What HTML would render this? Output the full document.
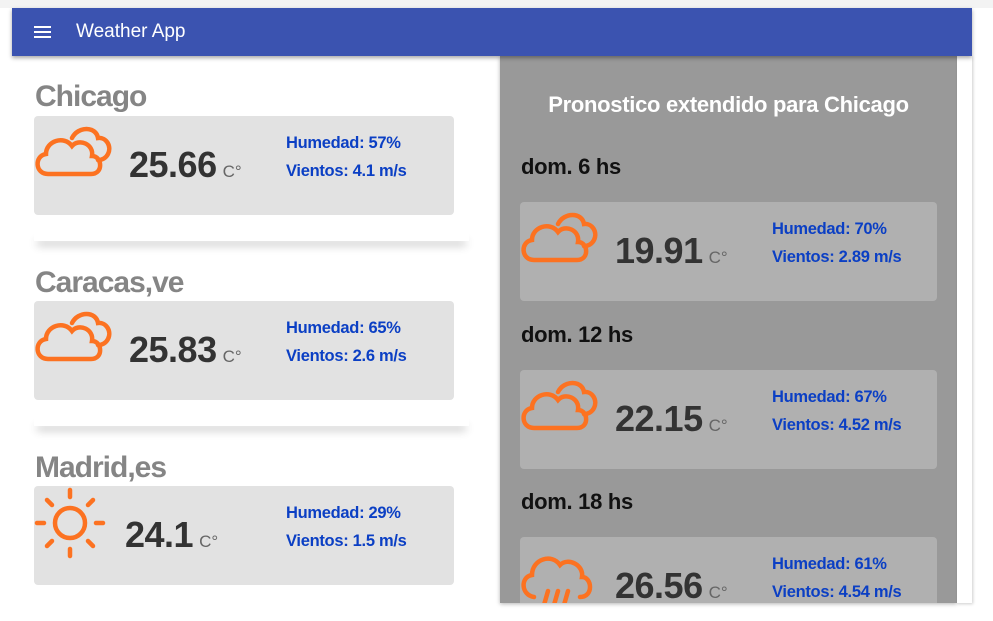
<!DOCTYPE html>
<html><head><style>
body{margin:0;width:993px;height:621px;background:#fff;font-family:"Liberation Sans",Arial,sans-serif;position:relative;overflow:hidden}
.top{position:absolute;left:0;top:0;width:993px;height:8px;background:#f3f3f3}
.bar{position:absolute;left:12px;top:8px;width:960px;height:48px;background:#3b53b0;box-shadow:0 2px 4px rgba(0,0,0,.35);color:#fff;z-index:2}
.bar .t{position:absolute;left:64px;top:13px;font-size:19px}
.ham{position:absolute;left:22px;top:18px;width:17px}
.ham i{display:block;height:2px;background:#fff;margin-bottom:3px}
.city{position:absolute;left:35px;font-size:30px;font-weight:bold;color:#858585;letter-spacing:-1px}
.card{position:absolute;width:420px;height:99px;background:#e2e2e2;border-radius:4px}
.rcard{background:#b0b0b0;width:417px}
.ic{position:absolute;left:0;top:8px}
.temp{position:absolute;left:95px;top:28px;font-size:36px;font-weight:bold;color:#333;letter-spacing:-.5px}
.temp span{font-size:17px;font-weight:normal;color:#666;margin-left:6px;letter-spacing:0}
.info{position:absolute;left:252px;top:13px;font-size:16.5px;font-weight:bold;color:#0b3fc4;line-height:28px;letter-spacing:-.3px}
.sep{position:absolute;left:34px;width:435px;height:10px;background:#fff;box-shadow:0 7px 9px -3px rgba(0,0,0,.3)}
.panel{position:absolute;left:500px;top:56px;width:457px;height:547px;background:#999;box-shadow:0 1px 4px rgba(0,0,0,.3)}
.pw{position:absolute;left:957px;top:56px;width:15px;height:547px;background:#fff;box-shadow:1px 1px 3px rgba(0,0,0,.2)}
.ptitle{position:absolute;left:0;width:457px;top:36px;text-align:center;color:#fff;font-size:22px;font-weight:bold;letter-spacing:-.3px}
.day{position:absolute;left:21px;font-size:22px;font-weight:bold;color:#111;letter-spacing:-.3px}
</style></head><body>
<div class="top"></div>
<div class="bar"><div class="ham"><i></i><i></i><i></i></div><div class="t">Weather App</div></div>

<svg width="0" height="0" style="position:absolute"><defs>
<g id="cloud" fill="none" stroke="#fc7221" stroke-width="4.5" stroke-linecap="round">
<path d="M38 14 C44 2 62 2 64 14 C72 13 78 22 74 30 C72 34 68 36 64 36"/>
<path d="M14 50 C1 50 0 32 12 30 C12 17 30 11 38 22 C45 14 60 20 58 32 C68 32 70 50 57 50 Z"/>
</g>
<g id="sun" fill="none" stroke="#fc7221" stroke-width="4.5" stroke-linecap="round">
<circle cx="36" cy="36" r="15"/>
<path d="M36 3v7M36 62v7M3 36h7M62 36h7M13 13l5 5M54 54l5 5M59 13l-5 5M18 54l-5 5"/>
</g>
<g id="rain" fill="none" stroke="#fc7221" stroke-width="4.5" stroke-linecap="round">
<path d="M14 52 C1 50 0 32 12 30 C12 14 32 8 40 20 C48 12 64 20 62 32 C72 32 74 52 60 52"/>
<path d="M28 46l-4 14M38 46l-4 14M48 46l-4 14"/>
</g>
</defs></svg>

<div class="city" style="top:80px">Chicago</div>
<div class="card" style="left:34px;top:116px"><svg class="ic" width="80" height="60"><use href="#cloud"/></svg><div class="temp">25.66<span>C°</span></div><div class="info">Humedad: 57%<br>Vientos: 4.1 m/s</div></div>
<div class="sep" style="top:231px"></div>
<div class="city" style="top:266px">Caracas,ve</div>
<div class="card" style="left:34px;top:301px"><svg class="ic" width="80" height="60"><use href="#cloud"/></svg><div class="temp">25.83<span>C°</span></div><div class="info">Humedad: 65%<br>Vientos: 2.6 m/s</div></div>
<div class="sep" style="top:416px"></div>
<div class="city" style="top:451px">Madrid,es</div>
<div class="card" style="left:34px;top:486px"><svg class="ic" style="top:1px" width="72" height="72"><use href="#sun"/></svg><div class="temp" style="left:91px">24.1<span>C°</span></div><div class="info">Humedad: 29%<br>Vientos: 1.5 m/s</div></div>

<div class="panel">
<div class="ptitle">Pronostico extendido para Chicago</div>
<div class="day" style="top:98px">dom. 6 hs</div>
<div class="card rcard" style="left:20px;top:146px"><svg class="ic" width="80" height="60"><use href="#cloud"/></svg><div class="temp">19.91<span>C°</span></div><div class="info">Humedad: 70%<br>Vientos: 2.89 m/s</div></div>
<div class="day" style="top:266px">dom. 12 hs</div>
<div class="card rcard" style="left:20px;top:314px"><svg class="ic" width="80" height="60"><use href="#cloud"/></svg><div class="temp">22.15<span>C°</span></div><div class="info">Humedad: 67%<br>Vientos: 4.52 m/s</div></div>
<div class="day" style="top:433px">dom. 18 hs</div>
<div style="position:absolute;left:0;top:470px;width:457px;height:77px;overflow:hidden">
<div class="card rcard" style="left:20px;top:11px"><svg class="ic" width="80" height="70"><use href="#rain"/></svg><div class="temp">26.56<span>C°</span></div><div class="info">Humedad: 61%<br>Vientos: 4.54 m/s</div></div>
</div>
</div>
<div class="pw"></div>
</body></html>
